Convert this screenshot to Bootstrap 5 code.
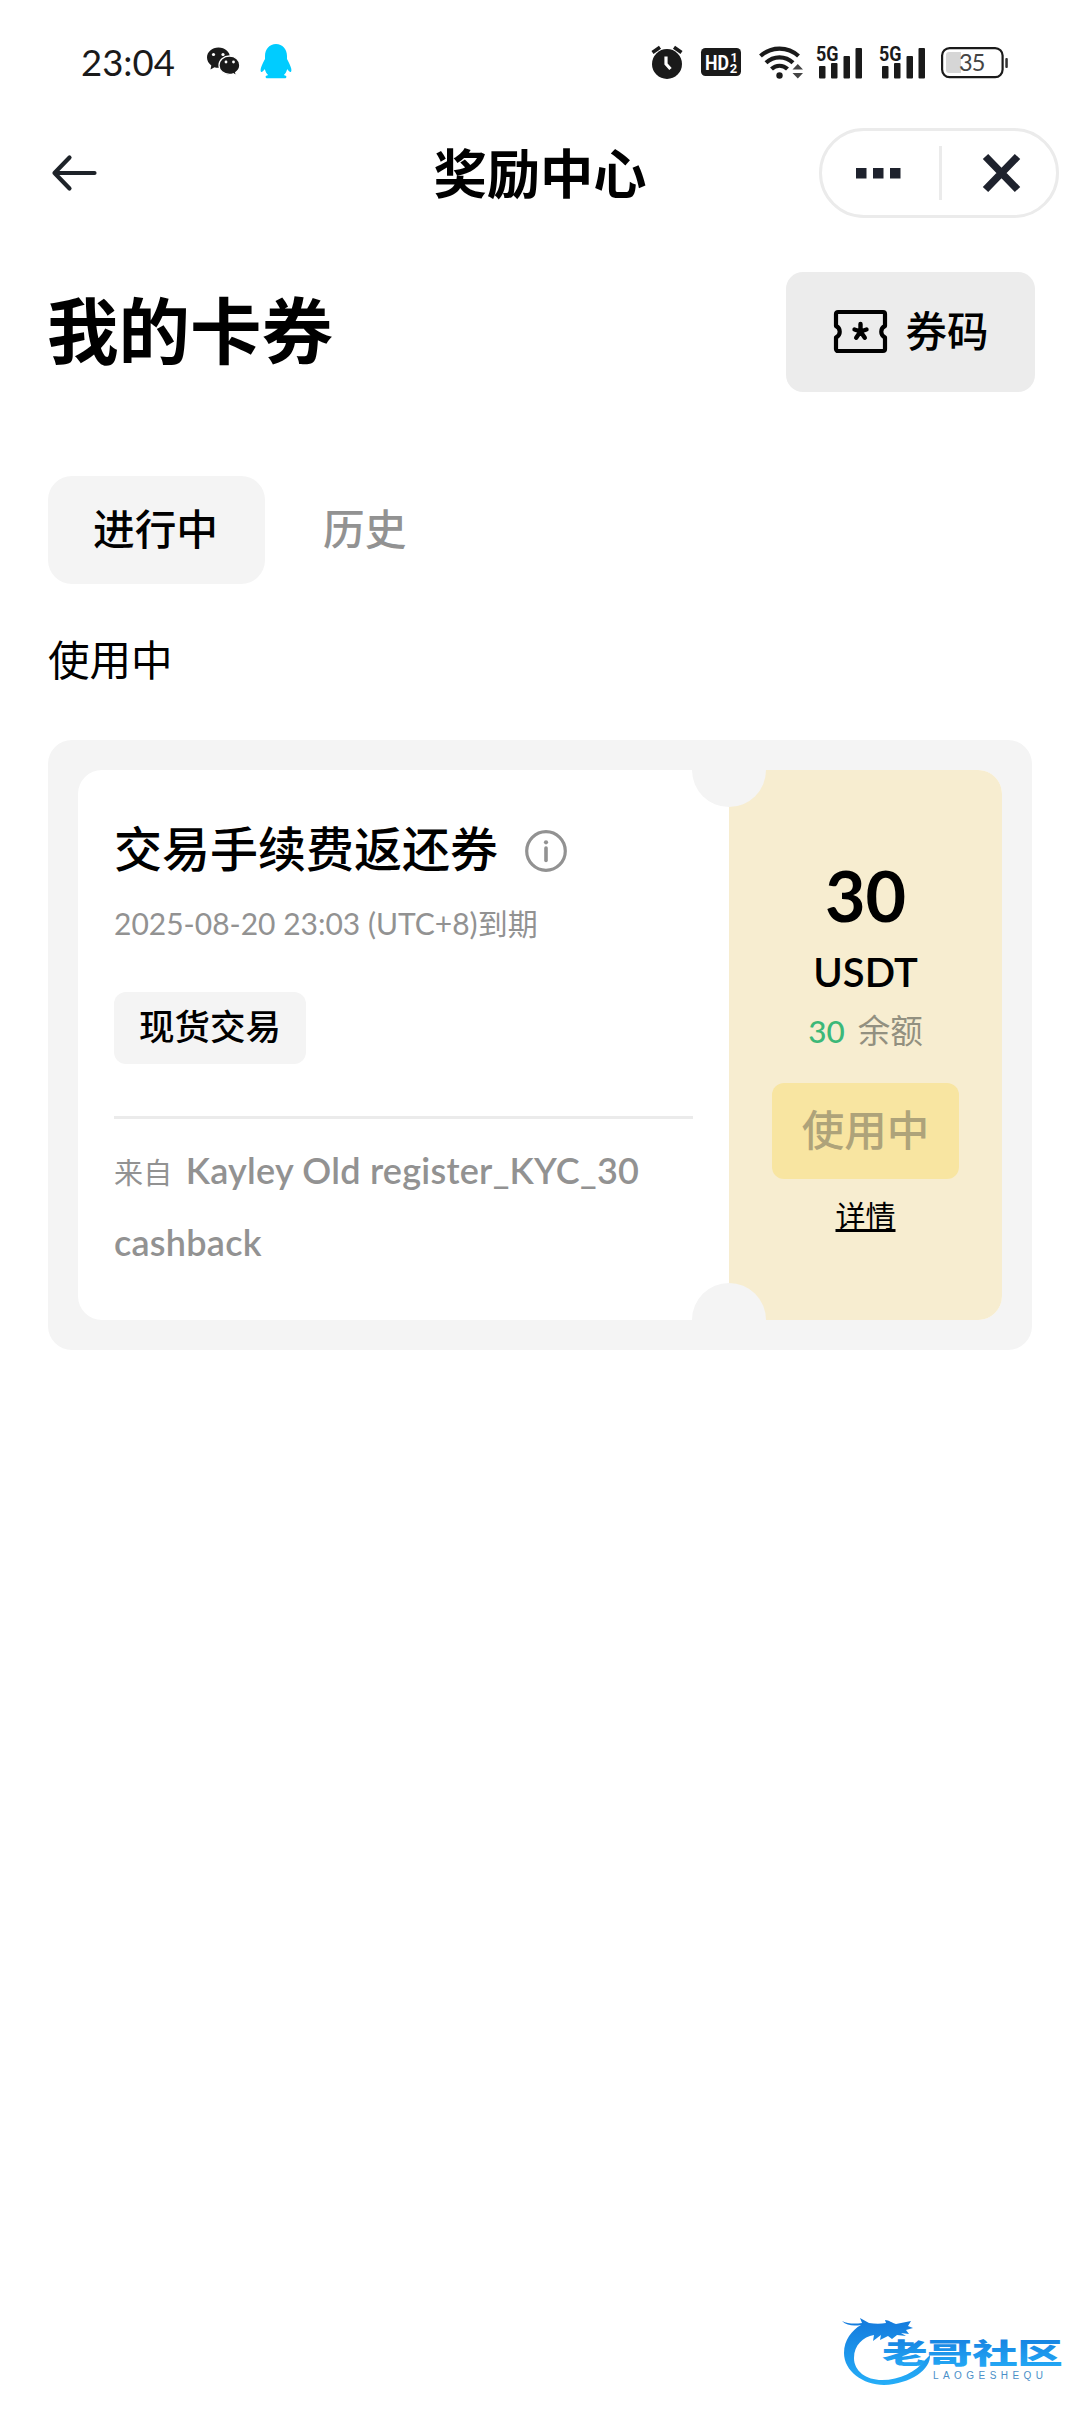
<!DOCTYPE html>
<html lang="zh-CN">
<head>
<meta charset="utf-8">
<meta name="viewport" content="width=device-width, initial-scale=1">
<title>奖励中心</title>
<link href="https://cdn.jsdelivr.net/npm/bootstrap@5.3.0/dist/css/bootstrap.min.css" rel="stylesheet">
<style>
  body { font-family: Lato, "Noto Sans CJK SC", sans-serif; color: #000; background: #fff; line-height: 1; }
  svg { display: block; flex: none; overflow: visible; }
  .screen { width: 1080px; height: 2412px; overflow: hidden; }
  .status-bar { height: 124px; padding: 0 72px 0 81px; color: #1a1a1a; }
  .clock { font-size: 36.5px; line-height: 44px; width: 126px; }
  .penguin { margin: -1px 0 0 20px; }
  .icon-hd, .icon-wifi { margin-left: 18px; }
  .icon-sim-a { margin-left: 12px; }
  .icon-sim-b { margin-left: 17px; }
  .icon-battery { margin-left: 16px; }
  .top-bar { height: 98px; padding: 0 21px; }
  .top-bar > div { flex: 1 1 0; }
  .back-arrow { margin-left: 31px; }
  .page-title { font-size: 53.3px; font-weight: 700; line-height: 60px; white-space: nowrap; padding-bottom: 1px; }
  .capsule { width: 240px; height: 90px; border: 3px solid #ebebeb; border-radius: 45px; }
  .capsule-line { width: 3px; height: 54px; background: #ebebeb; }
  .content { padding: 0 48px; }
  .heading-row { height: 120px; margin-top: 50px; }
  .big-title { font-size: 71.5px; font-weight: 700; line-height: 80px; margin: 0 0 4px -1px; }
  .code-btn { width: 249px; height: 120px; margin-right: -3px; border-radius: 17px; background: #ececec; font-size: 41.5px; gap: 18px; border: 0; font-weight: 500; padding: 0 0 1px 2px; }
  .tab-row { margin-top: 84px; }
  .tab-row .nav-link { height: 108px; line-height: 106px; padding: 0 45px; font-size: 41.7px; font-weight: 500; color: #929292; white-space: nowrap; }
  .tab-row .nav-link.active { color: #000; background: #f4f4f4; border-radius: 24px; width: 217px; }
  .tab-row .nav-link.history { padding-left: 58px; }
  .section-label { font-size: 41.5px; line-height: 60px; margin-top: 46px; }
  .coupon-wrap { margin-top: 50px; background: #f4f4f4; border-radius: 24px; padding: 30px; }
  .coupon { height: 550px; border-radius: 24px; background: #fff; overflow: hidden; }
  .coupon-main { width: 651px; padding: 47px 36px 0 36px; }
  .coupon-side { width: 273px; background: #f7edd0; padding-top: 89px; }
  .notch { width: 74px; height: 74px; border-radius: 50%; background: #f4f4f4; left: 614px; }
  .notch-up { top: -37px; }
  .notch-down { bottom: -37px; }
  .coupon-title { font-size: 48px; line-height: 64px; font-weight: 500; gap: 27px; }
  .expiry { font-size: 30px; line-height: 42px; color: #929292; margin-top: 21px; white-space: nowrap; }
  .kind-tag { width: 192px; height: 72px; line-height: 70px; margin-top: 48px; background: #f4f4f4; border-radius: 12px; font-size: 35.5px; font-weight: 500; }
  .rule { height: 3px; background: #ebebeb; margin-top: 52px; }
  .origin { font-size: 36px; line-height: 72px; letter-spacing: .25px; color: #929292; font-weight: 600; margin-top: 15px; white-space: nowrap; }
  .origin small { font-size: 29px; line-height: 1; font-weight: 400; margin-right: 4px; }
  .amount { font-size: 70px; font-weight: 700; line-height: 72px; }
  .unit { font-size: 40px; font-weight: 600; line-height: 48px; margin-top: 17px; }
  .balance { font-size: 32.5px; line-height: 40px; color: #929080; margin-top: 15px; white-space: nowrap; gap: 13px; }
  .balance b { font-weight: 500; font-size: 31.5px; color: #3cb878; }
  .use-btn { width: 187px; height: 96px; line-height: 94px; margin-top: 32px; border-radius: 12px; background: #f8e5a1; color: #aea37a; font-size: 42.5px; font-weight: 500; }
  .detail-link { font-size: 30px; line-height: 40px; margin-top: 16px; color: #000; text-decoration: underline; text-decoration-thickness: 3px; text-underline-offset: 2px; text-decoration-skip-ink: none; }
  .forum-logo { left: 840px; top: 2314px; }
</style>
</head>
<body>
<div class="screen position-relative">
  <header class="status-bar d-flex align-items-center">
    <div class="clock">23:04</div>
    <!-- chat bubbles -->
    <svg width="33" height="30" viewBox="0 0 33 30">
      <path fill="#1a1a1a" d="M11.500 0.500C5 .5 0 5 0 10.500c0 3.200 1.700 6 4.300 8L3.500 22.500l4-2.300c1.500.5 3 .6 4.500.5 5.800-.2 11-4.600 11-10.200C23 5 18 .5 11.500.5z"/>
      <path fill="#1a1a1a" stroke="#fff" stroke-width="1.300" d="M22.500 9C16.600 9 12 13 12 18.200s4.600 9.200 10.500 9.200c1.300 0 2.500-.2 3.700-.6l3.400 2-.9-3.300c2.500-1.700 4.100-4.300 4.100-7.300C32.800 13 28.300 9 22.500 9z"/>
      <g fill="#fff"><circle cx="6.500" cy="7.500" r="1.600"/><circle cx="16" cy="7.500" r="1.600"/><circle cx="19" cy="15" r="1.400"/><circle cx="26.500" cy="15" r="1.400"/></g>
    </svg>
    <!-- penguin -->
    <svg class="penguin" width="32" height="35" viewBox="0 0 32 35">
      <path fill="#0cf" d="M16 0C9.500 0 5 5 5 12v3C3.500 18 1.500 21.500 .8 24.500c-.5 2.500 0 4 1 3.500 1-.4 2.200-1.800 3-3 .6 2.500 1.700 4.500 3.300 6-1.600.5-2.600 1-2.500 1.900.2 1.300 1 1.300 4 1.300h12.800c3 0 3.800 0 4-1.300.1-.9-.9-1.400-2.500-1.900 1.600-1.500 2.700-3.500 3.300-6 .8 1.200 2 2.600 3 3 1 .5 1.500-1 1-3.500C30.500 21.500 28.500 18 27 15v-3C27 5 22.500 0 16 0z"/>
    </svg>
    <div class="ms-auto d-flex align-items-center">
      <!-- alarm -->
      <svg width="32" height="34" viewBox="0 0 32 34">
        <circle cx="16" cy="19" r="15" fill="#1a1a1a"/>
        <path d="M1.500 7.500 9 2.200M30.500 7.500 23 2.200" stroke="#1a1a1a" stroke-width="3.600"/>
        <path d="M15 11.500v7.500l4.500 5" fill="none" stroke="#fff" stroke-width="3.200"/>
      </svg>
      <svg class="icon-hd" width="40" height="28" viewBox="0 0 40 28">
        <rect width="40" height="28" rx="4.500" fill="#1a1a1a"/>
        <text x="4" y="21.500" font-family="Roboto" font-weight="700" font-size="20.500" fill="#fff" textLength="24" lengthAdjust="spacingAndGlyphs">HD</text>
        <text x="29.500" y="13.500" font-family="Roboto" font-weight="700" font-size="12.500" fill="#fff">1</text>
        <text x="28.800" y="25" font-family="Roboto" font-weight="700" font-size="13" fill="#fff">2</text>
      </svg>
      <!-- wifi -->
      <svg class="icon-wifi" width="45" height="34" viewBox="0 0 45 34">
        <g fill="none" stroke="#1a1a1a" stroke-width="4.200">
          <path d="M1.500 11a28 28 0 0 1 38 0"/><path d="M7 17.800a19.500 19.500 0 0 1 27 0"/><path d="M12.500 24a11.500 11.500 0 0 1 16 0"/>
        </g>
        <circle cx="20.500" cy="30.500" r="3.200" fill="#1a1a1a"/>
        <path fill="#444" d="M33.500 24.500h10.500l-5.200-5.500zM33.500 28h10.500l-5.200 5.500z"/>
      </svg>
      <!-- signal 1 -->
      <svg class="icon-sim-a" width="46" height="34" viewBox="0 0 46 34">
        <g fill="#1a1a1a"><rect x="3" y="21" width="6.500" height="12.500" rx="1"/><rect x="15" y="18" width="6.500" height="15.500" rx="1"/><rect x="27.500" y="11" width="6.500" height="22.500" rx="1"/><rect x="39.500" y="3" width="6.500" height="30.500" rx="1"/></g>
        <text x="0" y="15.800" font-family="Roboto" font-weight="700" font-size="20.500" fill="#1a1a1a" textLength="22.500" lengthAdjust="spacingAndGlyphs">5G</text>
      </svg>
      <!-- signal 2 -->
      <svg class="icon-sim-b" width="46" height="34" viewBox="0 0 46 34">
        <g fill="#1a1a1a"><rect x="3" y="21" width="6.500" height="12.500" rx="1"/><rect x="15" y="18" width="6.500" height="15.500" rx="1"/><rect x="27.500" y="11" width="6.500" height="22.500" rx="1"/><rect x="39.500" y="3" width="6.500" height="30.500" rx="1"/></g>
        <text x="0" y="15.800" font-family="Roboto" font-weight="700" font-size="20.500" fill="#1a1a1a" textLength="22.500" lengthAdjust="spacingAndGlyphs">5G</text>
      </svg>
      <!-- battery -->
      <svg class="icon-battery" width="67" height="31" viewBox="0 0 67 31">
        <rect x="1.100" y="1.100" width="60.500" height="29" rx="7.500" fill="#fff" stroke="#1a1a1a" stroke-width="2.200"/>
        <path d="M8 5h12v21H8a3 3 0 0 1-3-3V8a3 3 0 0 1 3-3z" fill="#d6d6d6"/>
        <rect x="64.300" y="11" width="2.500" height="10" rx="1" fill="#333"/>
        <text x="18" y="24" font-family="Lato" font-size="23.500" fill="#444" textLength="26.500">35</text>
      </svg>
    </div>
  </header>

  <nav class="top-bar d-flex align-items-center">
    <div>
      <svg class="back-arrow" width="45" height="36" viewBox="0 0 45 36"><path d="M17.500 2.500 2.500 18l15 15.500M2.500 18h40" fill="none" stroke="#1e2329" stroke-width="4.200" stroke-linecap="round" stroke-linejoin="round"/></svg>
    </div>
    <h1 class="page-title mb-0">奖励中心</h1>
    <div class="d-flex justify-content-end">
      <div class="capsule d-flex align-items-center">
        <svg width="117" height="40" viewBox="0 0 117 40"><path fill="#1e222d" d="M34 15h10.500v10.500H34zM51 15h10.500v10.500H51zM68 15h10.500v10.500H68z"/></svg>
        <div class="capsule-line"></div>
        <svg width="114" height="40" viewBox="0 0 114 40"><path d="m43.500 3.500 32 33M75.500 3.500l-32 33" stroke="#1e222d" stroke-width="7.500"/></svg>
      </div>
    </div>
  </nav>

  <main class="content">
    <div class="heading-row d-flex align-items-center justify-content-between">
      <h2 class="big-title">我的卡券</h2>
      <button class="code-btn d-flex align-items-center justify-content-center" type="button">
        <svg width="53" height="43" viewBox="0 0 53 43">
          <path d="M4 2h45a2 2 0 0 1 2 2v12a6.300 6.300 0 0 0 0 11.500V39a2 2 0 0 1-2 2H4a2 2 0 0 1-2-2V27.500A6.300 6.300 0 0 0 2 16V4a2 2 0 0 1 2-2z" fill="none" stroke="#000" stroke-width="4.200" stroke-linejoin="round"/>
          <path d="M26.500 21.500v-7.500M26.500 21.500l-6-2M26.500 21.500l6-2M26.500 21.500l-4.300 6.200M26.500 21.500l4.300 6.200" fill="none" stroke="#000" stroke-width="4.400" stroke-linecap="round"/>
        </svg>
        <span>券码</span>
      </button>
    </div>

    <div class="tab-row nav nav-pills">
      <a class="nav-link active" href="#">进行中</a>
      <a class="nav-link history" href="#">历史</a>
    </div>

    <div class="section-label">使用中</div>

    <section class="coupon-wrap">
      <div class="coupon d-flex position-relative">
        <div class="coupon-main">
          <div class="coupon-title d-flex align-items-center">
            <span>交易手续费返还券</span>
            <svg class="mt-1" width="42" height="42" viewBox="0 0 42 42"><circle cx="21" cy="21" r="19.300" fill="none" stroke="#929292" stroke-width="3.200"/><path d="M21 18v12.500" stroke="#929292" stroke-width="3.600" stroke-linecap="round"/><circle cx="21" cy="12.300" r="2.100" fill="#929292"/></svg>
          </div>
          <div class="expiry"><span>2025-08-20 23:03 (UTC+8)</span>到期</div>
          <div class="kind-tag text-center">现货交易</div>
          <div class="rule"></div>
          <div class="origin"><small>来自</small> <span>Kayley Old register_KYC_30</span><br>cashback</div>
        </div>
        <div class="coupon-side d-flex flex-column align-items-center">
          <div class="amount">30</div>
          <div class="unit">USDT</div>
          <div class="balance d-flex"><b>30</b><span>余额</span></div>
          <div class="use-btn text-center">使用中</div>
          <a class="detail-link" href="#">详情</a>
        </div>
        <div class="notch notch-up position-absolute"></div>
        <div class="notch notch-down position-absolute"></div>
      </div>
    </section>
  </main>

  <svg class="forum-logo position-absolute" width="226" height="76" viewBox="0 0 226 76">
    <defs>
      <linearGradient id="sea" x1="0" y1="0" x2="0" y2="1"><stop offset="0" stop-color="#1479dc"/><stop offset="1" stop-color="#25aef8"/></linearGradient>
    </defs>
    <!-- dragon body and head -->
    <path fill="url(#sea)" d="M2 7c6 3 13 3 20 2l-2-5 9 5c6 1 12 1 17 0l-1-3c4 0 7 3 11 4l15-3-3 5 5 2-7 2 3 4-8-1 5 3-9-1-5 4-4-3-8 4 1-5-8 6 1-6c-11 2-20 10-20 23 0 13 12 22 28 22 18 0 34-8 43-20l5-5c1 14-19 29-46 30C23 71 4 57 4 39 4 26 12 16 21 11 14 12 7 12 2 7z"/>
    <text transform="translate(42 49.500) scale(1.520 .96)" font-family="Noto Sans CJK SC" font-weight="900" font-size="30" fill="url(#sea)" textLength="119">老哥社区</text>
    <text x="93" y="65" font-family="Liberation Sans" font-size="10" fill="#4a8fc8" textLength="110">LAOGESHEQU</text>
  </svg>
</div>
<script src="https://cdn.jsdelivr.net/npm/bootstrap@5.3.0/dist/js/bootstrap.bundle.min.js"></script>
</body>
</html>
